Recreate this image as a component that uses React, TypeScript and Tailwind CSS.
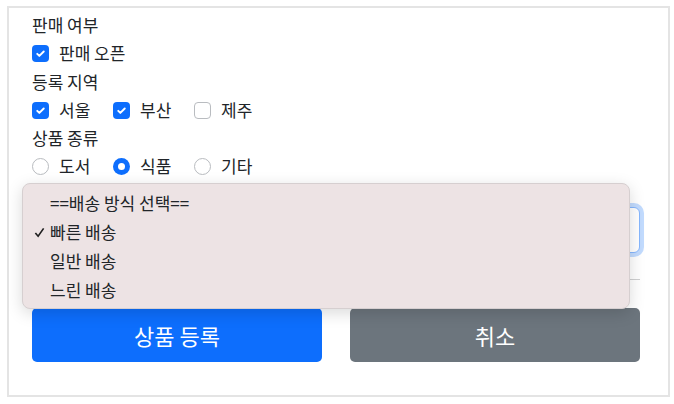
import { useState } from "react";

const font = { fontFamily: '"Noto Sans CJK KR", "Noto Sans", sans-serif' };

function CheckBox({ checked }: { checked: boolean }) {
  return checked ? (
    <span className="flex h-[17px] w-[17px] shrink-0 items-center justify-center rounded-[4px] bg-[#0d6efd]">
      <svg viewBox="0 0 20 20" className="h-[13px] w-[13px]">
        <path
          d="M5 10.5l3.2 3.2L15 7"
          fill="none"
          stroke="#fff"
          strokeWidth="3"
          strokeLinecap="round"
          strokeLinejoin="round"
        />
      </svg>
    </span>
  ) : (
    <span className="h-[17px] w-[17px] shrink-0 rounded-[4px] border border-[#b9bcc0] bg-white" />
  );
}

function Radio({ checked }: { checked: boolean }) {
  return checked ? (
    <span className="flex h-[17px] w-[17px] shrink-0 items-center justify-center rounded-full bg-[#0d6efd]">
      <span className="h-[7px] w-[7px] rounded-full bg-white" />
    </span>
  ) : (
    <span className="h-[17px] w-[17px] shrink-0 rounded-full border border-[#b9bcc0] bg-white" />
  );
}

function Option({ label, children }: { label: string; children: React.ReactNode }) {
  return (
    <label className="flex min-w-[81px] items-center gap-[10px] whitespace-nowrap">
      {children}
      <span>{label}</span>
    </label>
  );
}

export default function App() {
  const [regions] = useState({ 서울: true, 부산: true, 제주: false });
  const [kind] = useState("식품");

  return (
    <div className="pl-[7px] pt-[6px] text-[17px] text-[#212529]" style={font}>
      <div className="relative h-[391px] w-[663px] border-2 border-[#e4e4e4] px-[23px] pt-[3px]">
        <div className="flex h-[28px] items-center">판매 여부</div>
        <div className="flex h-[28px] items-center">
          <Option label="판매 오픈">
            <CheckBox checked />
          </Option>
        </div>
        <div className="flex h-[29px] items-center">등록 지역</div>
        <div className="flex h-[28px] items-center">
          {Object.entries(regions).map(([name, on]) => (
            <Option key={name} label={name}>
              <CheckBox checked={on} />
            </Option>
          ))}
        </div>
        <div className="flex h-[28px] items-center">상품 종류</div>
        <div className="flex h-[28px] items-center">
          {["도서", "식품", "기타"].map((k) => (
            <Option key={k} label={k}>
              <Radio checked={kind === k} />
            </Option>
          ))}
        </div>

        <div className="mt-[27px] h-[46px] w-[608px] rounded-[6px] border border-[#86b7fe] bg-white shadow-[0_0_0_4px_rgba(13,110,253,0.25)]" />
        <hr className="mt-[26px] w-[608px] border-t border-[#cfd0d1]" />
        <div className="mt-[28px] flex w-[608px] justify-between">
          <button className="h-[54px] w-[290px] rounded-[5px] bg-[#0d6efd] text-[22px] text-white">
            상품 등록
          </button>
          <button className="h-[54px] w-[290px] rounded-[5px] bg-[#6c757d] text-[22px] text-white">
            취소
          </button>
        </div>

        <div className="absolute left-[13px] top-[175px] w-[608px] rounded-[8px] border border-[#d6cfd0] bg-[#ede3e4] py-[4px] shadow-[0_4px_16px_rgba(0,0,0,0.15)]">
          {["==배송 방식 선택==", "빠른 배송", "일반 배송", "느린 배송"].map((o, i) => (
            <div key={o} className="relative flex h-[29px] items-center pl-[27px]">
              {i === 1 && (
                <svg viewBox="0 0 12 12" className="absolute left-[11px] top-[10px] h-[11px] w-[11px]">
                  <path d="M1.5 6.5l3 3.5L10.5 1.5" fill="none" stroke="#1f1f1f" strokeWidth="1.8" />
                </svg>
              )}
              {o}
            </div>
          ))}
        </div>
      </div>
    </div>
  );
}
